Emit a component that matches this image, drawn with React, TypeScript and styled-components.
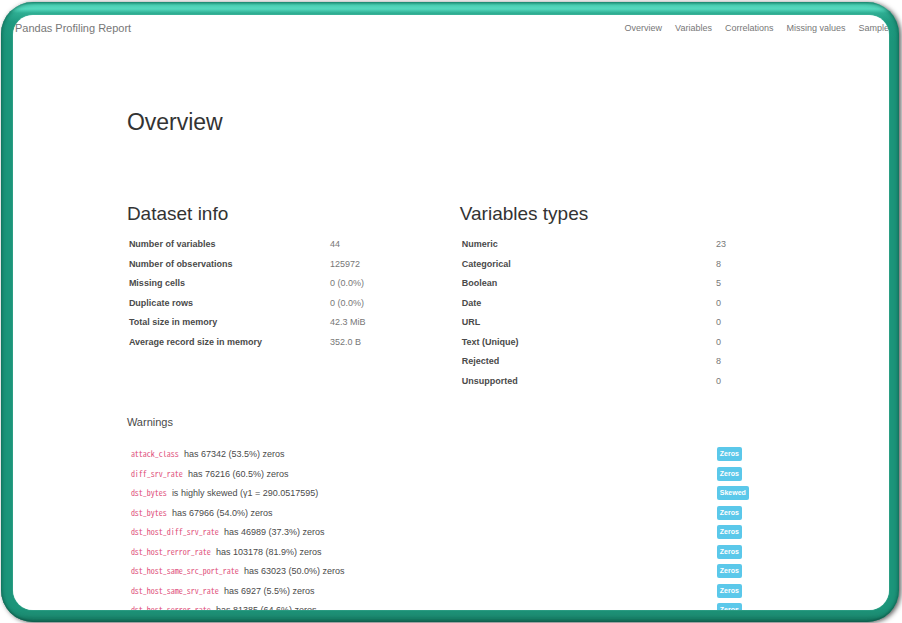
import React from "react";
import styled, { createGlobalStyle } from "styled-components";

const GlobalStyle = createGlobalStyle`
  *, *::before, *::after { box-sizing: border-box; }
  body {
    margin: 0;
    background: #ffffff;
    color: #4a4a4a;
    font: 9px/18px "Liberation Sans", Arial, sans-serif;
  }
`;

const Frame = styled.div`
  height: 100vh;
  padding: 2px 3px 1px 1px;
  display: flex;
`;

const Bezel = styled.div`
  flex: 1;
  min-width: 0;
  display: flex;
  padding: 13px 10px 12px 12px;
  border-radius: 32px;
  background: linear-gradient(
    180deg,
    #2aa88c 0,
    #4fd3b7 3px,
    #55d8bd 7px,
    #2fae93 11px,
    #1f9a80 20px,
    #1c957a 40px,
    #1c957a calc(100% - 14px),
    #1c8c72 calc(100% - 7px),
    #14705a 100%
  );
  box-shadow:
    2px 1px 5px rgba(0, 0, 0, 0.65),
    inset 2px 0 5px -1px #147560,
    inset -2px 0 5px -1px #147560,
    inset 0 -1px 2px #0b4335;
`;

const Screen = styled.div`
  flex: 1;
  min-width: 0;
  overflow: hidden;
  border-radius: 20px;
  background: #ffffff;
  box-shadow: 0 0 1px #b9efe2;
`;

const NavBar = styled.nav`
  display: flex;
  justify-content: space-between;
  align-items: center;
  padding: 4px 0 0 2px;
  white-space: nowrap;
`;

const Brand = styled.a`
  font-size: 11px;
  color: #777777;
  text-decoration: none;
`;

const NavLinks = styled.div`
  display: flex;
  gap: 13px;
`;

const NavLink = styled.a`
  color: #777777;
  text-decoration: none;
`;

const Content = styled.main`
  padding: 69px 11% 0 13%;
`;

const Title = styled.h1`
  margin: 0;
  font-size: 23px;
  line-height: 32px;
  font-weight: 400;
  color: #333333;
`;

const Columns = styled.div`
  display: grid;
  grid-template-columns: 1fr 1fr;
  margin-top: 63px;
`;

const SectionTitle = styled.h2`
  margin: 0 0 7px;
  font-size: 19px;
  line-height: 26px;
  font-weight: 400;
  color: #333333;
`;

const Table = styled.table`
  width: 100%;
  border-collapse: collapse;
  table-layout: fixed;
`;

const Row = styled.tr`
  height: 20px;

  &:nth-child(even) {
    height: 19px;
  }
`;

const Label = styled.th<{ $width: string }>`
  width: ${(p) => p.$width};
  padding: 0 2px;
  text-align: left;
  font-weight: 700;
`;

const Value = styled.td`
  padding: 0;
  color: #777777;
`;

const WarningsTitle = styled.h3`
  margin: 22px 0 12px;
  font-size: 11px;
  line-height: 20px;
  font-weight: 400;
`;

const WarningText = styled.td`
  width: 88%;
  padding: 0 4px;
`;

const WarningTag = styled.td`
  padding: 0 0 0 4px;
`;

const Code = styled.code`
  margin-right: 5px;
  font-family: "Noto Sans Mono CJK SC", "Liberation Mono", monospace;
  font-size: 8px;
  line-height: 12px;
  color: #e0507c;
`;

const Badge = styled.span`
  display: block;
  width: max-content;
  padding: 0 3px;
  border-radius: 2px;
  background: #5bc8ea;
  color: #ffffff;
  font-size: 7px;
  line-height: 14px;
  font-weight: 700;
`;

const links = ["Overview", "Variables", "Correlations", "Missing values", "Sample"];

const dataset = [
  ["Number of variables", "44"],
  ["Number of observations", "125972"],
  ["Missing cells", "0 (0.0%)"],
  ["Duplicate rows", "0 (0.0%)"],
  ["Total size in memory", "42.3 MiB"],
  ["Average record size in memory", "352.0 B"],
];

const types = [
  ["Numeric", "23"],
  ["Categorical", "8"],
  ["Boolean", "5"],
  ["Date", "0"],
  ["URL", "0"],
  ["Text (Unique)", "0"],
  ["Rejected", "8"],
  ["Unsupported", "0"],
];

const warnings = [
  ["attack_class", "has 67342 (53.5%) zeros", "Zeros"],
  ["diff_srv_rate", "has 76216 (60.5%) zeros", "Zeros"],
  ["dst_bytes", "is highly skewed (γ1 = 290.0517595)", "Skewed"],
  ["dst_bytes", "has 67966 (54.0%) zeros", "Zeros"],
  ["dst_host_diff_srv_rate", "has 46989 (37.3%) zeros", "Zeros"],
  ["dst_host_rerror_rate", "has 103178 (81.9%) zeros", "Zeros"],
  ["dst_host_same_src_port_rate", "has 63023 (50.0%) zeros", "Zeros"],
  ["dst_host_same_srv_rate", "has 6927 (5.5%) zeros", "Zeros"],
  ["dst_host_serror_rate", "has 81385 (64.6%) zeros", "Zeros"],
];

interface FactsProps {
  title: string;
  rows: string[][];
  labelWidth: string;
}

function Facts({ title, rows, labelWidth }: FactsProps) {
  return (
    <section>
      <SectionTitle>{title}</SectionTitle>
      <Table>
        <tbody>
          {rows.map(([name, value]) => (
            <Row key={name}>
              <Label scope="row" $width={labelWidth}>{name}</Label>
              <Value>{value}</Value>
            </Row>
          ))}
        </tbody>
      </Table>
    </section>
  );
}

export default function App() {
  return (
    <>
      <GlobalStyle />
      <Frame>
        <Bezel>
          <Screen>
            <NavBar>
              <Brand href="#overview">Pandas Profiling Report</Brand>
              <NavLinks>
                {links.map((l) => (
                  <NavLink key={l} href="#overview">{l}</NavLink>
                ))}
              </NavLinks>
            </NavBar>
            <Content id="overview">
              <Title>Overview</Title>
              <Columns>
                <Facts title="Dataset info" rows={dataset} labelWidth="61%" />
                <Facts title="Variables types" rows={types} labelWidth="77%" />
              </Columns>
              <WarningsTitle>Warnings</WarningsTitle>
              <Table>
                <tbody>
                  {warnings.map(([name, text, tag]) => (
                    <Row key={name + text}>
                      <WarningText><Code>{name}</Code>{text}</WarningText>
                      <WarningTag><Badge>{tag}</Badge></WarningTag>
                    </Row>
                  ))}
                </tbody>
              </Table>
            </Content>
          </Screen>
        </Bezel>
      </Frame>
    </>
  );
}
